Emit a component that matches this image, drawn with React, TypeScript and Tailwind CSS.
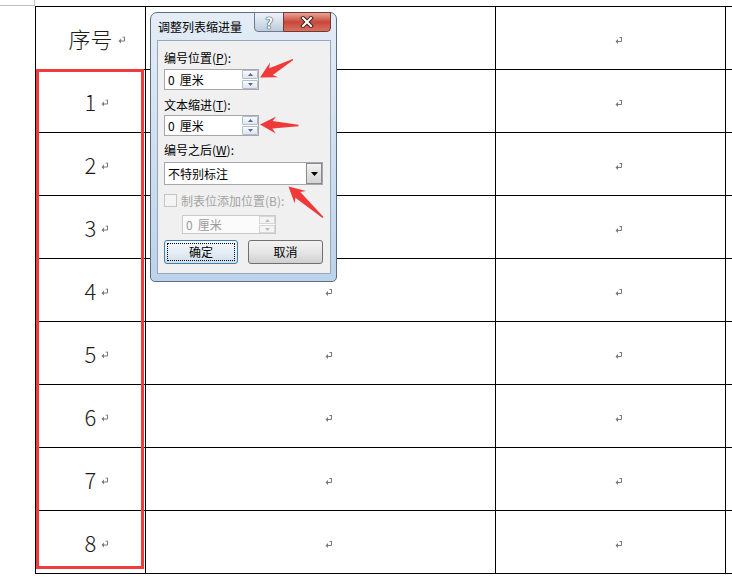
import React from 'react';

const ROWS = ['序号', '1', '2', '3', '4', '5', '6', '7', '8'];

function ParaMark({ className = '' }: { className?: string }) {
  return (
    <svg width="8" height="7" viewBox="0 0 8 7" className={className}>
      <path d="M6.5 0V4.5H2 M4.5 0.5H6.5" stroke="#7a7a7a" strokeWidth="1" fill="none" />
      <path d="M0.5 4.5L3 2V7Z" fill="#7a7a7a" />
    </svg>
  );
}

function Tri({ up, color }: { up?: boolean; color: string }) {
  return (
    <svg width="5" height="3" viewBox="0 0 5 3">
      <path d={up ? 'M0 3L2.5 0L5 3Z' : 'M0 0L2.5 3L5 0Z'} fill={color} />
    </svg>
  );
}

function Spin({ disabled }: { disabled?: boolean }) {
  const arrow = disabled ? '#b8bec8' : '#4d6a9c';
  return (
    <div
      className={
        disabled
          ? 'flex h-[19px] w-[94px] items-stretch border border-[#c9c9c9] bg-[#fbfbfb]'
          : 'flex h-[21px] w-[95px] items-stretch border border-[#a4a8ae] bg-white'
      }
    >
      <span className={disabled ? 'flex-1 pl-[3px] text-[#9a9a9a] leading-[17px]' : 'flex-1 pl-[3px] leading-[19px]'}>
        0<span className="ml-[5px]">厘米</span>
      </span>
      <div className="flex w-[16px] flex-col gap-px">
        <div className={disabled ? 'flex flex-1 items-center justify-center border border-[#d6d6d6] bg-[#f4f4f4]' : 'flex flex-1 items-center justify-center rounded-[1px] border border-[#b4bcc8] bg-gradient-to-b from-[#fbfcfd] to-[#dfe5ec]'}>
          <Tri up color={arrow} />
        </div>
        <div className={disabled ? 'flex flex-1 items-center justify-center border border-[#d6d6d6] bg-[#f4f4f4]' : 'flex flex-1 items-center justify-center rounded-[1px] border border-[#b4bcc8] bg-gradient-to-b from-[#fbfcfd] to-[#dfe5ec]'}>
          <Tri color={arrow} />
        </div>
      </div>
    </div>
  );
}

function arrowPoints(tip: [number, number], tail: [number, number]) {
  const [tx, ty] = tip;
  const [sx, sy] = tail;
  const len = Math.hypot(sx - tx, sy - ty);
  const ux = (sx - tx) / len;
  const uy = (sy - ty) / len;
  const px = -uy;
  const py = ux;
  const at = (d: number, w: number) => `${(tx + ux * d + px * w).toFixed(1)},${(ty + uy * d + py * w).toFixed(1)}`;
  return [
    at(0, 0),
    at(16, 8.5),
    at(12.5, 3.8),
    at(len, 0.7),
    at(len, -0.7),
    at(12.5, -3.8),
    at(16, -8.5),
  ].join(' ');
}

export default function App() {
  return (
    <div className="relative h-[579px] w-[732px] overflow-hidden bg-white font-['Noto_Sans_CJK_SC','Noto_Sans',sans-serif]">
      {/* page corner mark */}
      <div className="h-[6px] w-[35px] border-r border-b border-[#c0c0c0]" />

      {/* table */}
      <div className="ml-[35px] grid w-max grid-cols-[110px_350px_230px_120px] border-t border-l border-black">
        {ROWS.map((label) => (
          <React.Fragment key={label}>
            <div className="flex h-[63px] items-center justify-center border-r border-b border-black">
              <span className="relative text-[22px] leading-none font-light text-[#1c1c1c]">
                {label}
                <ParaMark className="absolute top-1/2 left-full mt-[2px] ml-[5px] -translate-y-1/2" />
              </span>
            </div>
            <div className="flex h-[63px] items-center justify-center border-r border-b border-black">
              <span className="pt-[5px] pl-[16px]">
                <ParaMark />
              </span>
            </div>
            <div className="flex h-[63px] items-center justify-center border-r border-b border-black">
              <span className="pt-[5px] pl-[16px]">
                <ParaMark />
              </span>
            </div>
            <div className="h-[63px] border-r border-b border-black" />
          </React.Fragment>
        ))}
      </div>

      {/* red highlight box */}
      <div className="absolute top-[69px] left-[36px] h-[500px] w-[108px] border-[3px] border-[#f03c3c]" />

      {/* dialog */}
      <div className="absolute top-[12px] left-[150px] flex h-[270px] w-[187px] flex-col rounded-t-[7px] rounded-b-[5px] border border-[#5d6d7e] bg-gradient-to-b from-[#e4edf7] via-[#cfdff0] to-[#bcd3ec] text-[12px] leading-[16px] text-black">
        <div className="flex h-[27px] items-start justify-between">
          <span className="mt-[6px] ml-[7px]">调整列表缩进量</span>
          <div className="-mt-px mr-[5px] flex">
            <div className="flex h-[20px] w-[30px] items-center justify-center rounded-bl-[4px] border border-[#6b7c8f] bg-gradient-to-b from-[#eef3f9] via-[#d6e0eb] to-[#bccbdc] text-[15px] leading-none font-bold text-white [text-shadow:0_0_1px_#2d3e52,0_0_1px_#2d3e52,0_0_1px_#2d3e52]">
              ?
            </div>
            <div className="-ml-px flex h-[20px] w-[48px] items-center justify-center rounded-br-[4px] border border-[#6e3a33] bg-gradient-to-b from-[#e8a596] via-[#c6473a] to-[#d97060]">
              <svg width="14" height="12" viewBox="0 0 14 12">
                <path d="M3 2L11 10M11 2L3 10" stroke="#3a2420" strokeWidth="4" strokeLinecap="square" />
                <path d="M3 2L11 10M11 2L3 10" stroke="#ffffff" strokeWidth="2" strokeLinecap="square" />
              </svg>
            </div>
          </div>
        </div>

        <div className="ml-[6px] flex h-[234px] w-[174px] flex-col border border-[#97a8ba] bg-[#f0f0f0] pl-[6px]">
          <div className="mt-[9px]">
            编号位置(<span className="underline">P</span>):
          </div>
          <div className="mt-[3px]">
            <Spin />
          </div>
          <div className="mt-[7px]">
            文本缩进(<span className="underline">T</span>):
          </div>
          <div className="mt-[2px]">
            <Spin />
          </div>
          <div className="mt-[6px]">
            编号之后(<span className="underline">W</span>):
          </div>
          <div className="mt-[4px] flex h-[23px] w-[159px] border border-[#a4a8ae] bg-white">
            <span className="flex-1 pl-[3px] leading-[21px]">不特别标注</span>
            <div className="flex w-[16px] items-center justify-center border border-[#8a8a8a] bg-gradient-to-b from-[#f2f2f2] to-[#d4d4d4]">
              <svg width="7" height="4" viewBox="0 0 7 4">
                <path d="M0 0H7L3.5 4Z" fill="#000" />
              </svg>
            </div>
          </div>
          <div className="mt-[9px] flex h-[13px] items-center gap-[4px]">
            <div className="h-[13px] w-[13px] border border-[#c4c4c4] bg-[#f4f4f4]" />
            <span className="text-[#a3a3a3]">制表位添加位置(B):</span>
          </div>
          <div className="mt-[8px] ml-[18px]">
            <Spin disabled />
          </div>
          <div className="mt-[6px] flex gap-[10px]">
            <div className="relative flex h-[24px] w-[74px] items-center justify-center rounded-[3px] border border-[#3c7fb1] bg-gradient-to-b from-[#f4f8fb] via-[#e4eef6] to-[#cfdde9]">
              <div className="absolute inset-[2px] border border-dotted border-black" />
              确定
            </div>
            <div className="flex h-[24px] w-[75px] items-center justify-center rounded-[3px] border border-[#707070] bg-gradient-to-b from-[#f2f2f2] via-[#e6e6e6] to-[#d0d0d0]">
              取消
            </div>
          </div>
        </div>
      </div>

      {/* annotation arrows */}
      <svg className="pointer-events-none absolute inset-0" width="732" height="579">
        <polygon points={arrowPoints([260, 77.5], [293, 59.5])} fill="#f03a3a" />
        <polygon points={arrowPoints([260, 124.5], [298.5, 125.5])} fill="#f03a3a" />
        <polygon points={arrowPoints([288.5, 186.5], [323, 217.5])} fill="#f03a3a" />
      </svg>
    </div>
  );
}
